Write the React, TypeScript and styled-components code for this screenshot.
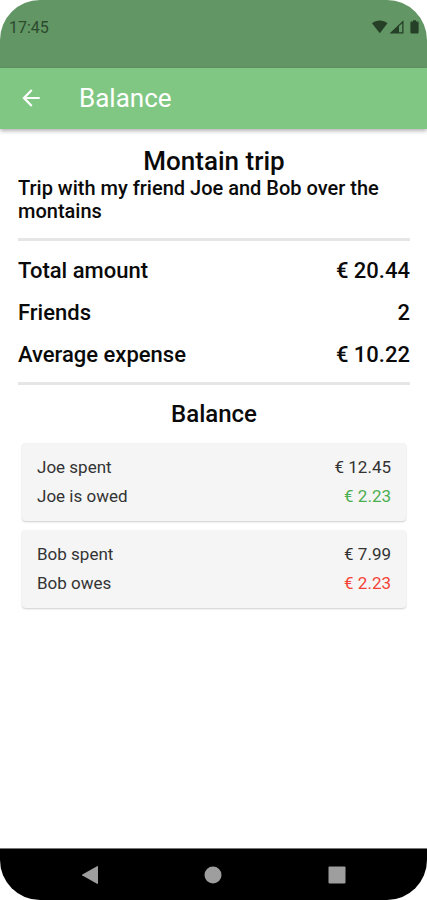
import React from "react";
import styled, { createGlobalStyle } from "styled-components";

const GlobalStyle = createGlobalStyle`
  *, *::before, *::after { box-sizing: border-box; }
  body {
    margin: 0;
    background: #fff;
    font-family: Roboto, "Liberation Sans", sans-serif;
  }
  h1, h2, p, dl, dt, dd { margin: 0; font-weight: inherit; }
`;

const Screen = styled.div`
  display: flex;
  flex-direction: column;
  min-height: 100vh;
  overflow: hidden;
  background: #fff;
  border-radius: 40px;
`;

const StatusBar = styled.div`
  display: flex;
  justify-content: space-between;
  align-items: flex-start;
  height: 68px;
  padding: 18px 7px 0 9px;
  background: #629664;
  color: #2c4a2d;
  font-size: 16px;
  line-height: 20px;
`;

const StatusIcons = styled.div`
  display: flex;
  align-items: center;
  height: 18px;
  color: #263f27;
`;

const AppBar = styled.header`
  display: flex;
  align-items: center;
  gap: 34px;
  height: 61px;
  padding: 0 17px 2px;
  background: #81c784;
  color: #fff;
  box-shadow: 0 2px 4px rgba(0, 0, 0, 0.3);
`;

const IconButton = styled.button`
  display: grid;
  place-items: center;
  width: 28px;
  height: 28px;
  padding: 0;
  border: 0;
  background: none;
  color: inherit;
`;

const AppTitle = styled.h1`
  font-size: 26px;
  line-height: 32px;
`;

const Content = styled.main`
  flex: 1;
  padding: 17px 17px 0 18px;
  color: #0a0a0a;
`;

const Heading = styled.h2<{ $large?: boolean }>`
  font-size: ${({ $large }) => ($large ? 26 : 24)}px;
  line-height: ${({ $large }) => ($large ? 31 : 30)}px;
  font-weight: 500;
  text-align: center;
`;

const Description = styled.p`
  margin-bottom: 15px;
  font-size: 20px;
  line-height: 23px;
  font-weight: 500;
`;

const Divider = styled.hr`
  height: 3px;
  margin: 13px 0 14px;
  border: 0;
  background: #e6e6e6;
`;

const Summary = styled.dl`
  display: flex;
  flex-direction: column;
  gap: 14px;
  margin-top: 16px;
  font-size: 22px;
  line-height: 28px;
  font-weight: 500;
`;

const Row = styled.div`
  display: flex;
  justify-content: space-between;
`;

const Cards = styled.div`
  display: flex;
  flex-direction: column;
  gap: 9px;
  padding: 14px 4px;
`;

const Card = styled.dl`
  display: flex;
  flex-direction: column;
  gap: 5px;
  padding: 12px 15px 13px;
  border-radius: 4px;
  background: #f5f5f5;
  box-shadow: 0 1px 2px rgba(0, 0, 0, 0.2);
  color: #333;
  font-size: 17px;
  line-height: 24px;
`;

const Amount = styled.dd<{ $tone?: "credit" | "debt" }>`
  color: ${({ $tone }) =>
    $tone === "credit" ? "#4caf50" : $tone === "debt" ? "#f44336" : "inherit"};
`;

const NavBar = styled.nav`
  display: grid;
  grid-template-columns: repeat(3, 1fr);
  justify-items: center;
  align-items: center;
  height: 52px;
  padding: 0 28px;
  border-top: 1px solid #777;
  background: #000;
  color: #9e9e9e;
`;

const summary = [
  { label: "Total amount", value: "€ 20.44" },
  { label: "Friends", value: "2" },
  { label: "Average expense", value: "€ 10.22" },
];

const balances = [
  { name: "Joe", spent: "€ 12.45", verb: "is owed", due: "€ 2.23", tone: "credit" as const },
  { name: "Bob", spent: "€ 7.99", verb: "owes", due: "€ 2.23", tone: "debt" as const },
];

export default function App() {
  return (
    <>
      <GlobalStyle />
      <Screen>
        <StatusBar>
          <span>17:45</span>
          <StatusIcons>
            <svg width="48" height="14" viewBox="0 0 48 14" fill="currentColor" aria-hidden="true">
              <path d="M0 3.3C4.3-.5 11.2-.5 15.5 3.3L7.8 13.2Z" />
              <path d="M17.5 13.5 31.5.3V13.5ZM27 6.2V12.2H30.2V3.2Z" fillRule="evenodd" />
              <path d="M41 1.5V.2H44V1.5H45.6Q46.6 1.5 46.6 2.5V12.6Q46.6 13.6 45.6 13.6H39.4Q38.4 13.6 38.4 12.6V2.5Q38.4 1.5 39.4 1.5Z" />
            </svg>
          </StatusIcons>
        </StatusBar>
        <AppBar>
          <IconButton type="button" aria-label="Back">
            <svg width="26" height="26" viewBox="0 0 24 24" fill="currentColor" aria-hidden="true">
              <path d="M20 11H7.83l5.59-5.59L12 4l-8 8 8 8 1.41-1.41L7.83 13H20v-2z" />
            </svg>
          </IconButton>
          <AppTitle>Balance</AppTitle>
        </AppBar>
        <Content>
          <Heading $large>Montain trip</Heading>
          <Description>Trip with my friend Joe and Bob over the montains</Description>
          <Divider />
          <Summary>
            {summary.map(({ label, value }) => (
              <Row key={label}>
                <dt>{label}</dt>
                <Amount>{value}</Amount>
              </Row>
            ))}
          </Summary>
          <Divider />
          <Heading>Balance</Heading>
          <Cards>
            {balances.map(({ name, spent, verb, due, tone }) => (
              <Card key={name}>
                <Row>
                  <dt>{name} spent</dt>
                  <Amount>{spent}</Amount>
                </Row>
                <Row>
                  <dt>{name} {verb}</dt>
                  <Amount $tone={tone}>{due}</Amount>
                </Row>
              </Card>
            ))}
          </Cards>
        </Content>
        <NavBar aria-label="System navigation">
          <IconButton type="button" aria-label="Back">
            <svg width="18" height="20" viewBox="0 0 18 20" fill="currentColor" aria-hidden="true">
              <path d="M16 1.2Q17 .7 17 1.8V18.2Q17 19.3 16 18.8L1.4 10.6Q.6 10 1.4 9.4Z" />
            </svg>
          </IconButton>
          <IconButton type="button" aria-label="Home">
            <svg width="18" height="18" viewBox="0 0 18 18" fill="currentColor" aria-hidden="true">
              <circle cx="9" cy="9" r="8.5" />
            </svg>
          </IconButton>
          <IconButton type="button" aria-label="Overview">
            <svg width="18" height="18" viewBox="0 0 18 18" fill="currentColor" aria-hidden="true">
              <rect x=".5" y=".5" width="17" height="17" rx="1" />
            </svg>
          </IconButton>
        </NavBar>
      </Screen>
    </>
  );
}
